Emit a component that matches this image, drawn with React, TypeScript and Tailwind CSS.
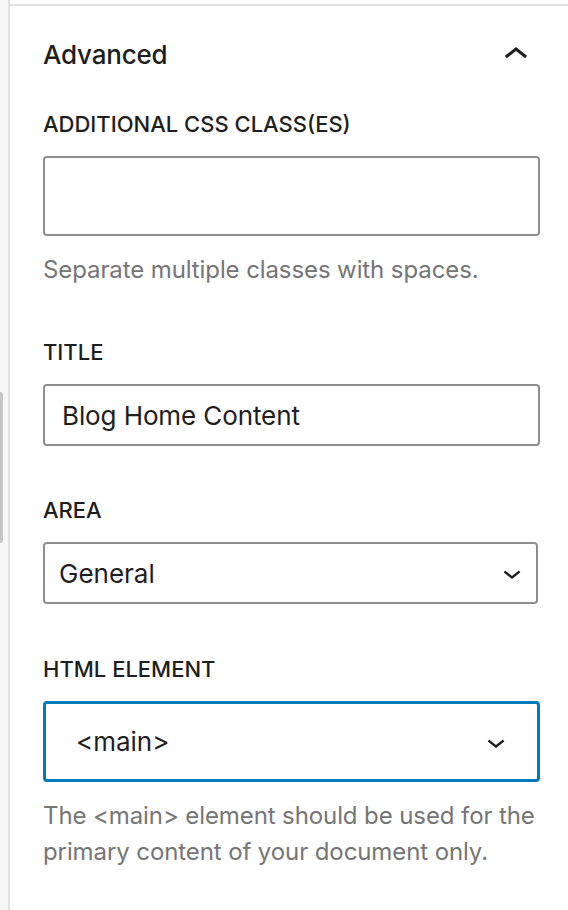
import { useState } from "react";

const FONT = "font-['Inter','Noto_Sans',sans-serif]";

function ChevronUp() {
  return (
    <svg viewBox="0 0 24 24" className="h-[48px] w-[48px] fill-[#1e1e1e]" aria-hidden>
      <path d="M6.5 12.4L12 8l5.5 4.4-.9 1.2L12 10l-4.6 3.6-1-1.2z" />
    </svg>
  );
}

function ChevronDown() {
  return (
    <svg viewBox="0 0 24 24" className="h-[36px] w-[36px] fill-[#1e1e1e]" aria-hidden>
      <path d="M17.5 11.6L12 16l-5.5-4.4.9-1.2L12 14l4.6-3.6 1 1.2z" />
    </svg>
  );
}

function Label({ children }: { children: React.ReactNode }) {
  return (
    <div className="mb-[18px] text-[22px] font-medium uppercase leading-[28px] text-[#1e1e1e]">
      {children}
    </div>
  );
}

function Help({ children }: { children: React.ReactNode }) {
  return (
    <p className="mt-[16px] text-[24px] leading-[36px] tracking-[-0.1px] text-[#757575]">
      {children}
    </p>
  );
}

export default function App() {
  const [cssClass, setCssClass] = useState("");
  const [title, setTitle] = useState("Blog Home Content");

  return (
    <div className={`flex h-[910px] w-[568px] bg-white ${FONT}`}>
      {/* editor gutter + its scroll thumb */}
      <div className="w-[8px] shrink-0 bg-[#f6f6f6]">
        <div className="mt-[392px] h-[151px] w-[3px] rounded-r bg-[#c4c4c4]" />
      </div>

      <div className="flex flex-1 flex-col border-l-2 border-[#e0e0e0] pt-[4px]">
        <div className="border-t-2 border-[#e0e0e0] pl-[33px] pr-[28px]">
          {/* panel header */}
          <div className="flex items-center justify-between pt-[25px]">
            <h2 className="text-[26px] font-medium leading-[32px] tracking-[-0.2px] text-[#1e1e1e]">
              Advanced
            </h2>
            <ChevronUp />
          </div>

          <div className="mt-[31px]">
            <Label>Additional CSS class(es)</Label>
            <input
              value={cssClass}
              onChange={(e) => setCssClass(e.target.value)}
              className="h-[80px] w-full rounded-[4px] border-2 border-[#8f8f8f] px-[18px] text-[26px] text-[#1e1e1e] outline-none"
            />
            <Help>Separate multiple classes with spaces.</Help>
          </div>

          <div className="mt-[50px]">
            <Label>Title</Label>
            <input
              value={title}
              onChange={(e) => setTitle(e.target.value)}
              className="h-[62px] w-full rounded-[4px] border-2 border-[#8f8f8f] px-[17px] text-[26px] tracking-[-0.1px] text-[#1e1e1e] outline-none"
            />
          </div>

          <div className="mt-[50px]">
            <Label>Area</Label>
            <div className="flex h-[62px] w-[495px] items-center justify-between rounded-[4px] border-2 border-[#8f8f8f] pl-[14px] pr-[6px]">
              <span className="text-[26px] text-[#1e1e1e]">General</span>
              <ChevronDown />
            </div>
          </div>

          <div className="mt-[51px]">
            <Label>HTML element</Label>
            <div className="flex h-[81px] w-full items-center justify-between rounded-[4px] border-[3px] border-[#007cba] pl-[30px] pr-[23px]">
              <span className="text-[26px] text-[#1e1e1e]">&lt;main&gt;</span>
              <ChevronDown />
            </div>
            <Help>
              The &lt;main&gt; element should be used for the primary content of your
              document only.
            </Help>
          </div>
        </div>
      </div>
    </div>
  );
}
